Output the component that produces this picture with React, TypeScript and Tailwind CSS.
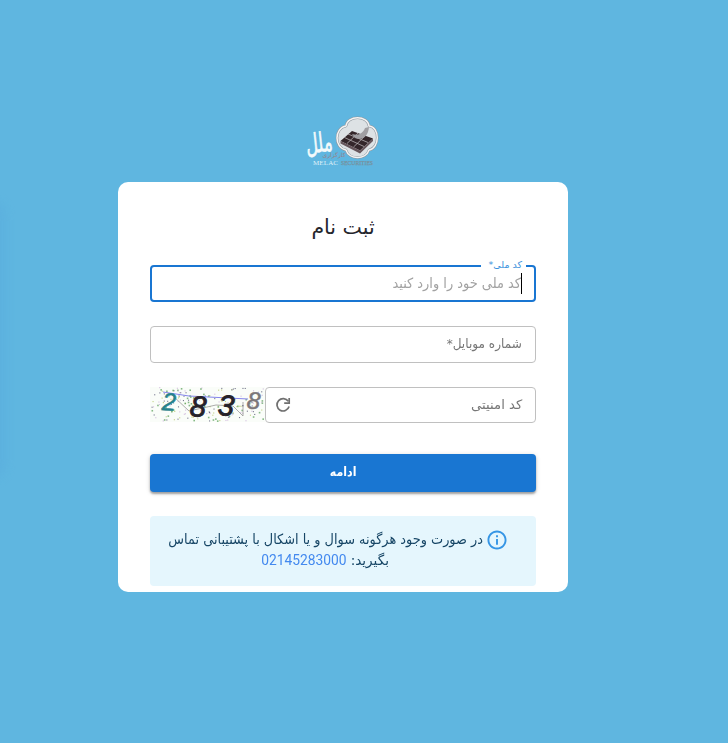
import React from "react";

const persian = "font-['DejaVu_Sans',sans-serif]";

type FitProps = { children: React.ReactNode; className?: string };

function Fit({ children, className = "" }: FitProps) {
  return <span className={`inline-block whitespace-nowrap ${className}`}>{children}</span>;
}

function Logo() {
  return (
    <svg width="90" height="64" viewBox="0 0 90 64" className="block" direction="ltr">
      <g strokeLinejoin="round">
        <path
          d="M48 18C49 7 70 7 71 18C82 19 82 40 71 42C68 52 51 52 48 42C36 40 36 20 48 18Z"
          fill="#dde2e5"
          stroke="#8f979d"
          strokeWidth="2.6"
        />
        <path
          d="M48 18C49 7 70 7 71 18C82 19 82 40 71 42C68 52 51 52 48 42C36 40 36 20 48 18Z"
          fill="none"
          stroke="#f2f3f4"
          strokeWidth="1.5"
        />
      </g>
      <path d="M42.500 33L54 23L75 30.500L62 42.500Z" fill="#33262a" />
      <path d="M46.500 29.500L66 38.500M50 26L70 34.500M49 35.500L60 25M55.500 39L67 28" stroke="#b5b0b2" strokeWidth="0.8" />
      <path d="M54 26C61 28 65 25 67 20L71 19C70 29 64 33 57 30Z" fill="#a09fa3" />
      <path d="M42.500 33V35.500L62 45.500L75 33V30.500L62 42.500Z" fill="#67575c" />
      <g transform="translate(22 44) rotate(-6) scale(.92 1.5)">
        <text x="0" y="0" fontFamily="DejaVu Sans" fontSize="18" fill="#f4fafb" stroke="#f4fafb" strokeWidth="0.4" textAnchor="middle">ملل</text>
      </g>
      <text x="36" y="49" fontFamily="DejaVu Sans" fontSize="6" fill="#9a7f88" textAnchor="middle">کارگزاری</text>
      <text x="15" y="56.500" fontFamily="Liberation Serif" fontSize="7" fill="#dff1f8" textLength="25">MELAC</text>
      <text x="43" y="56.500" fontFamily="Liberation Serif" fontSize="6.500" fill="#76929f" stroke="#76929f" strokeWidth="0.25" textLength="32" lengthAdjust="spacingAndGlyphs">SECURITIES</text>
    </svg>
  );
}

const dotColors = ["#5fa35f", "#4b4b6b", "#7676d6", "#b0c45c", "#8fc9b8", "#c8aad8", "#333d33"];
const dots = Array.from({ length: 190 }, (_, i) => {
  const a = Math.sin(i * 127.1 + 11.7) * 43758.5453;
  const b = Math.sin(i * 269.5 + 83.3) * 24634.6345;
  return {
    x: (a - Math.floor(a)) * 113,
    y: (b - Math.floor(b)) * 33.5,
    s: i % 4 === 0 ? 1.6 : 1.1,
    c: dotColors[(i * 5 + (i >> 2)) % 7],
  };
});

function Captcha() {
  return (
    <svg width="115" height="36" viewBox="0 0 115 36" className="block shrink-0" direction="ltr">
      <rect width="115" height="35" fill="#fafdf9" />
      {dots.map((d, i) => (
        <rect key={i} x={d.x} y={d.y} width={d.s} height={d.s} fill={d.c} opacity="0.75" />
      ))}
      <path d="M13 5L39 9L98 12" stroke="#8585eb" fill="none" />
      <path d="M22 8L39 24L66 18L83 19L93 29V15" stroke="#979797" strokeWidth="0.8" fill="none" />
      <g fontFamily="Liberation Sans" fontStyle="italic" strokeWidth="0.5">
        <text x="12" y="23.500" fontSize="25" fill="#26828c" stroke="#26828c" transform="rotate(4 18 15)">2</text>
        <text x="40" y="29.500" fontSize="29" fill="#252229" stroke="#252229" strokeWidth="0.9" transform="rotate(5 48 20)">8</text>
        <text x="68" y="28.500" fontSize="29" fill="#252229" stroke="#252229" strokeWidth="0.9" transform="rotate(5 76 19)">3</text>
        <text x="97" y="22" fontSize="24" fill="#7b777a" stroke="#7b777a" transform="rotate(5 104 13)">8</text>
      </g>
    </svg>
  );
}

export default function App() {
  return (
    <main
      dir="rtl"
      className={`relative flex h-[743px] w-[728px] flex-col overflow-hidden bg-[#5fb6e0] ${persian}`}
    >
      <div className="absolute -left-[26px] top-[200px] h-[280px] w-[32px] rounded-full bg-[#5aaede] opacity-60 blur-[5px]" />
      <div dir="ltr" className="flex h-[182px] items-end pb-[10px] pl-[298px]">
        <Logo />
      </div>
      <section className="mr-[160px] flex h-[410px] w-[450px] flex-col rounded-[10px] bg-white px-8">
        <h1 className="mt-[29px] flex h-8 items-center justify-center text-[20.5px] leading-8 text-[#25262d]">
          <Fit>ثبت نام</Fit>
        </h1>

        <div className="relative mt-[22px] flex h-[37px] shrink-0 items-center rounded border-2 border-[#1976d2] px-3">
          <label className="absolute -top-[10px] right-2 flex h-4 w-[45px] items-center bg-white pr-1 text-[9.5px] text-[#3a91dc]">
            <Fit>کد ملی*</Fit>
          </label>
          <span className="h-[21px] w-px shrink-0 bg-black" />
          <Fit className="origin-right scale-x-[0.925] text-[14px] text-[#a2a2a2]">کد ملی خود را وارد کنید</Fit>
        </div>

        <div className="mt-6 flex h-[37px] shrink-0 items-center rounded border border-[#c0c0c0] px-[13px] text-[13px] text-[#777]">
          <Fit className="-mt-px origin-right scale-x-[0.93]">شماره موبایل*</Fit>
        </div>

        <div className="mt-6 flex h-9 shrink-0">
          <div className="flex flex-1 items-center justify-between rounded border border-[#c0c0c0] pl-[8px] pr-[13px] text-[13px] text-[#777]">
            <Fit className="-mt-px origin-right scale-x-[1.02]">کد امنیتی</Fit>
            <svg width="18" height="18" viewBox="0 0 18 18" fill="none" stroke="#707070" strokeWidth="1.7">
              <path d="M14.300 5.300A6.200 6.200 0 1 0 15.100 10.600" />
              <path d="M15.200 2.100V7.100H10.200" />
            </svg>
          </div>
          <Captcha />
        </div>

        <button className="mt-[31px] flex h-[38px] shrink-0 items-center justify-center rounded bg-[#1976d2] text-[12.5px] font-bold text-white shadow-[0_2px_2px_rgba(0,0,0,0.3),0_1px_5px_rgba(0,0,0,0.16)]">
          <Fit className="-mt-[2px] scale-x-[0.88]">ادامه</Fit>
        </button>

        <div className="mt-6 flex h-[70px] shrink-0 flex-col rounded bg-[#e5f6fd] pt-[13px] text-[14px] text-[#174666]">
          <div className="flex h-[21px] items-center pr-[29px]">
            <svg width="20" height="20" viewBox="1.500 1.500 21 21" className="ml-1 shrink-0" fill="#3595e5">
              <path d="M11 7h2v2h-2zm0 4h2v6h-2zm1-9C6.48 2 2 6.48 2 12s4.480 10 10 10 10-4.480 10-10S17.520 2 12 2zm0 18c-4.410 0-8-3.590-8-8s3.590-8 8-8 8 3.590 8 8-3.590 8-8 8z" />
            </svg>
            <Fit className="w-[315px] origin-right scale-x-[0.92]">در صورت وجود هرگونه سوال و یا اشکال با پشتیبانی تماس</Fit>
          </div>
          <div className="flex h-[21px] items-center pr-[147px]">
            <Fit className="w-[37px] origin-right scale-x-[0.97]">بگیرید:</Fit>
            <a className="mr-[5px] origin-right scale-x-[0.985] font-['Roboto',sans-serif] text-[14px] text-[#4389ef]">02145283000</a>
          </div>
        </div>
      </section>
    </main>
  );
}
